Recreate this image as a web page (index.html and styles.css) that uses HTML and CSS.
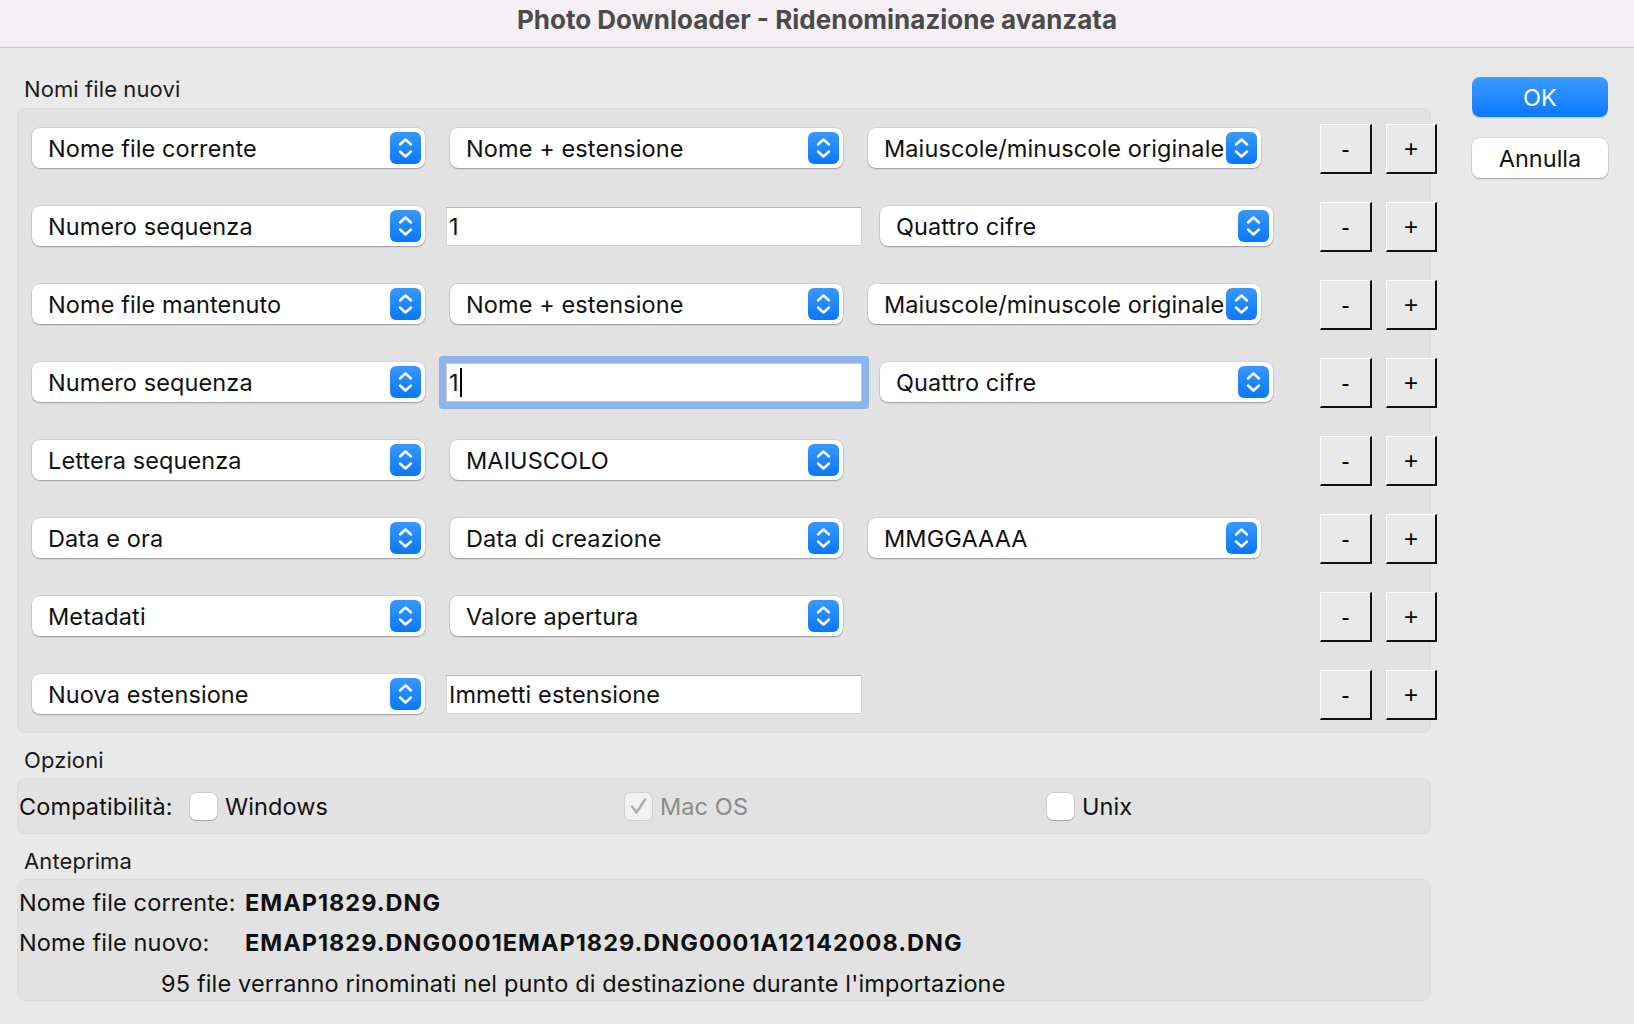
FILE: index.html
```html
<!DOCTYPE html>
<html lang="it">
<head>
<meta charset="utf-8">
<title>Photo Downloader - Ridenominazione avanzata</title>
<link rel="stylesheet" href="styles.css">
</head>
<body>
<div class="window">
  <div class="titlebar"><span class="title">Photo Downloader - Ridenominazione avanzata</span></div>
  <div class="content">
    <div class="main">
      <div class="section-label first">Nomi file nuovi</div>
      <div class="group rows">
        <div class="row">
          <div class="c1"><div class="pop"><span class="pop-text">Nome file corrente</span><span class="stepper"><svg viewBox="0 0 31 32" width="31" height="32"><path d="M10 12.5 L15.5 7.5 L21 12.5 M10 19.5 L15.5 24.5 L21 19.5" fill="none" stroke="#fff" stroke-width="2.4" stroke-linecap="round" stroke-linejoin="round"/></svg></span></div></div>
          <div class="c2"><div class="pop m2"><span class="pop-text">Nome + estensione</span><span class="stepper"><svg viewBox="0 0 31 32" width="31" height="32"><path d="M10 12.5 L15.5 7.5 L21 12.5 M10 19.5 L15.5 24.5 L21 19.5" fill="none" stroke="#fff" stroke-width="2.4" stroke-linecap="round" stroke-linejoin="round"/></svg></span></div></div>
          <div class="c3"><div class="pop"><span class="pop-text">Maiuscole/minuscole originale</span><span class="stepper"><svg viewBox="0 0 31 32" width="31" height="32"><path d="M10 12.5 L15.5 7.5 L21 12.5 M10 19.5 L15.5 24.5 L21 19.5" fill="none" stroke="#fff" stroke-width="2.4" stroke-linecap="round" stroke-linejoin="round"/></svg></span></div></div>
          <div class="c4"><button class="bevel">-</button><button class="bevel">+</button></div>
        </div>
        <div class="row">
          <div class="c1"><div class="pop"><span class="pop-text">Numero sequenza</span><span class="stepper"><svg viewBox="0 0 31 32" width="31" height="32"><path d="M10 12.5 L15.5 7.5 L21 12.5 M10 19.5 L15.5 24.5 L21 19.5" fill="none" stroke="#fff" stroke-width="2.4" stroke-linecap="round" stroke-linejoin="round"/></svg></span></div></div>
          <div class="c2"><div class="field">1</div></div>
          <div class="c3"><div class="pop m3"><span class="pop-text">Quattro cifre</span><span class="stepper"><svg viewBox="0 0 31 32" width="31" height="32"><path d="M10 12.5 L15.5 7.5 L21 12.5 M10 19.5 L15.5 24.5 L21 19.5" fill="none" stroke="#fff" stroke-width="2.4" stroke-linecap="round" stroke-linejoin="round"/></svg></span></div></div>
          <div class="c4"><button class="bevel">-</button><button class="bevel">+</button></div>
        </div>
        <div class="row">
          <div class="c1"><div class="pop"><span class="pop-text">Nome file mantenuto</span><span class="stepper"><svg viewBox="0 0 31 32" width="31" height="32"><path d="M10 12.5 L15.5 7.5 L21 12.5 M10 19.5 L15.5 24.5 L21 19.5" fill="none" stroke="#fff" stroke-width="2.4" stroke-linecap="round" stroke-linejoin="round"/></svg></span></div></div>
          <div class="c2"><div class="pop m2"><span class="pop-text">Nome + estensione</span><span class="stepper"><svg viewBox="0 0 31 32" width="31" height="32"><path d="M10 12.5 L15.5 7.5 L21 12.5 M10 19.5 L15.5 24.5 L21 19.5" fill="none" stroke="#fff" stroke-width="2.4" stroke-linecap="round" stroke-linejoin="round"/></svg></span></div></div>
          <div class="c3"><div class="pop"><span class="pop-text">Maiuscole/minuscole originale</span><span class="stepper"><svg viewBox="0 0 31 32" width="31" height="32"><path d="M10 12.5 L15.5 7.5 L21 12.5 M10 19.5 L15.5 24.5 L21 19.5" fill="none" stroke="#fff" stroke-width="2.4" stroke-linecap="round" stroke-linejoin="round"/></svg></span></div></div>
          <div class="c4"><button class="bevel">-</button><button class="bevel">+</button></div>
        </div>
        <div class="row">
          <div class="c1"><div class="pop"><span class="pop-text">Numero sequenza</span><span class="stepper"><svg viewBox="0 0 31 32" width="31" height="32"><path d="M10 12.5 L15.5 7.5 L21 12.5 M10 19.5 L15.5 24.5 L21 19.5" fill="none" stroke="#fff" stroke-width="2.4" stroke-linecap="round" stroke-linejoin="round"/></svg></span></div></div>
          <div class="c2"><div class="field focused">1<span class="caret"></span></div></div>
          <div class="c3"><div class="pop m3"><span class="pop-text">Quattro cifre</span><span class="stepper"><svg viewBox="0 0 31 32" width="31" height="32"><path d="M10 12.5 L15.5 7.5 L21 12.5 M10 19.5 L15.5 24.5 L21 19.5" fill="none" stroke="#fff" stroke-width="2.4" stroke-linecap="round" stroke-linejoin="round"/></svg></span></div></div>
          <div class="c4"><button class="bevel">-</button><button class="bevel">+</button></div>
        </div>
        <div class="row">
          <div class="c1"><div class="pop"><span class="pop-text">Lettera sequenza</span><span class="stepper"><svg viewBox="0 0 31 32" width="31" height="32"><path d="M10 12.5 L15.5 7.5 L21 12.5 M10 19.5 L15.5 24.5 L21 19.5" fill="none" stroke="#fff" stroke-width="2.4" stroke-linecap="round" stroke-linejoin="round"/></svg></span></div></div>
          <div class="c2"><div class="pop m2"><span class="pop-text">MAIUSCOLO</span><span class="stepper"><svg viewBox="0 0 31 32" width="31" height="32"><path d="M10 12.5 L15.5 7.5 L21 12.5 M10 19.5 L15.5 24.5 L21 19.5" fill="none" stroke="#fff" stroke-width="2.4" stroke-linecap="round" stroke-linejoin="round"/></svg></span></div></div>
          <div class="c3"></div>
          <div class="c4"><button class="bevel">-</button><button class="bevel">+</button></div>
        </div>
        <div class="row">
          <div class="c1"><div class="pop"><span class="pop-text">Data e ora</span><span class="stepper"><svg viewBox="0 0 31 32" width="31" height="32"><path d="M10 12.5 L15.5 7.5 L21 12.5 M10 19.5 L15.5 24.5 L21 19.5" fill="none" stroke="#fff" stroke-width="2.4" stroke-linecap="round" stroke-linejoin="round"/></svg></span></div></div>
          <div class="c2"><div class="pop m2"><span class="pop-text">Data di creazione</span><span class="stepper"><svg viewBox="0 0 31 32" width="31" height="32"><path d="M10 12.5 L15.5 7.5 L21 12.5 M10 19.5 L15.5 24.5 L21 19.5" fill="none" stroke="#fff" stroke-width="2.4" stroke-linecap="round" stroke-linejoin="round"/></svg></span></div></div>
          <div class="c3"><div class="pop"><span class="pop-text">MMGGAAAA</span><span class="stepper"><svg viewBox="0 0 31 32" width="31" height="32"><path d="M10 12.5 L15.5 7.5 L21 12.5 M10 19.5 L15.5 24.5 L21 19.5" fill="none" stroke="#fff" stroke-width="2.4" stroke-linecap="round" stroke-linejoin="round"/></svg></span></div></div>
          <div class="c4"><button class="bevel">-</button><button class="bevel">+</button></div>
        </div>
        <div class="row">
          <div class="c1"><div class="pop"><span class="pop-text">Metadati</span><span class="stepper"><svg viewBox="0 0 31 32" width="31" height="32"><path d="M10 12.5 L15.5 7.5 L21 12.5 M10 19.5 L15.5 24.5 L21 19.5" fill="none" stroke="#fff" stroke-width="2.4" stroke-linecap="round" stroke-linejoin="round"/></svg></span></div></div>
          <div class="c2"><div class="pop m2"><span class="pop-text">Valore apertura</span><span class="stepper"><svg viewBox="0 0 31 32" width="31" height="32"><path d="M10 12.5 L15.5 7.5 L21 12.5 M10 19.5 L15.5 24.5 L21 19.5" fill="none" stroke="#fff" stroke-width="2.4" stroke-linecap="round" stroke-linejoin="round"/></svg></span></div></div>
          <div class="c3"></div>
          <div class="c4"><button class="bevel">-</button><button class="bevel">+</button></div>
        </div>
        <div class="row">
          <div class="c1"><div class="pop"><span class="pop-text">Nuova estensione</span><span class="stepper"><svg viewBox="0 0 31 32" width="31" height="32"><path d="M10 12.5 L15.5 7.5 L21 12.5 M10 19.5 L15.5 24.5 L21 19.5" fill="none" stroke="#fff" stroke-width="2.4" stroke-linecap="round" stroke-linejoin="round"/></svg></span></div></div>
          <div class="c2"><div class="field">Immetti estensione</div></div>
          <div class="c3"></div>
          <div class="c4"><button class="bevel">-</button><button class="bevel">+</button></div>
        </div>
      </div>

      <div class="section-label">Opzioni</div>
      <div class="group options">
        <span class="opt-label">Compatibilità:</span>
        <label class="check win"><span class="box"></span><span>Windows</span></label>
        <label class="check mac disabled"><span class="box checked"><svg viewBox="0 0 27 27" width="27" height="27"><path d="M7 13.5 L11.5 19.5 L20 6.5" fill="none" stroke="#b0b0b0" stroke-width="2.6" stroke-linecap="round" stroke-linejoin="round"/></svg></span><span>Mac OS</span></label>
        <label class="check unix"><span class="box"></span><span>Unix</span></label>
      </div>

      <div class="section-label">Anteprima</div>
      <div class="group preview">
        <div class="pline"><span class="plabel">Nome file corrente:</span><b>EMAP1829.DNG</b></div>
        <div class="pline"><span class="plabel">Nome file nuovo:</span><b>EMAP1829.DNG0001EMAP1829.DNG0001A12142008.DNG</b></div>
        <div class="pline note">95 file verranno rinominati nel punto di destinazione durante l'importazione</div>
      </div>
    </div>
    <div class="side">
      <button class="mac-btn ok">OK</button>
      <button class="mac-btn cancel">Annulla</button>
    </div>
  </div>
</div>
</body>
</html>
```

FILE: styles.css
```css
* { box-sizing: border-box; }
html, body {
  margin: 0;
  padding: 0;
  width: 1634px;
  height: 1024px;
  overflow: hidden;
  background: #e9e9e9;
  font-family: Inter, "Noto Sans", "Liberation Sans", sans-serif;
  color: #111;
}
.window {
  width: 1634px;
  height: 1024px;
  background: #e9e9e9;
}
.titlebar {
  height: 48px;
  background: #f4f0f4;
  border-bottom: 1px solid #cbcbcb;
  display: flex;
  align-items: center;
  justify-content: center;
  padding-bottom: 8px;
}
.title {
  font-size: 26px;
  font-weight: 700;
  color: #4b4b4b;
}
.content {
  display: flex;
}
.main {
  width: 1431px;
  flex: none;
  padding-left: 17px;
}
.section-label {
  font-size: 22px;
  line-height: 26px;
  height: 26px;
  padding-left: 7px;
  margin-top: 14px;
  margin-bottom: 5px;
  color: #1a1a1a;
  letter-spacing: 0.1px;
}
.section-label.first {
  margin-top: 28px;
  margin-bottom: 6px;
}
.group {
  background: #e2e2e2;
  border: 1px solid #dcdcdc;
  border-radius: 8px;
}
.rows {
  height: 625px;
  padding: 14px 0 0 14px;
  display: flex;
  flex-direction: column;
  gap: 28px;
}
.row {
  display: flex;
  align-items: center;
  height: 50px;
  flex: none;
}
.c1, .c2, .c3, .c4 { flex: none; }
.c1 { width: 393px; }
.c2 { width: 443px; }
.c3 { width: 452px; }
.c4 { display: flex; gap: 14px; margin-top: 2px; }

.pop {
  width: 393px;
  height: 40px;
  background: #fff;
  border-radius: 8px;
  box-shadow: 0 0 0 0.5px rgba(0,0,0,0.12), 0 1px 1.5px rgba(0,0,0,0.28);
  display: flex;
  align-items: center;
  justify-content: space-between;
  padding: 0 4px 0 16px;
  font-size: 23.5px;
  letter-spacing: 0.1px;
}
.pop.m2 { margin-left: 25px; }
.pop.m3 { margin-left: 12px; }
.pop-text { white-space: nowrap; overflow: hidden; }
.stepper {
  width: 31px;
  height: 32px;
  border-radius: 6px;
  background: linear-gradient(#3898ff, #0a78f5);
  display: flex;
  flex: none;
}
.field {
  width: 416px;
  height: 39px;
  margin-left: 21px;
  background: #fff;
  border: 1px solid #d4d4d4;
  border-top-color: #b9b9b9;
  font-size: 23.5px;
  letter-spacing: 0.1px;
  line-height: 37px;
  padding-left: 2px;
  display: flex;
  align-items: center;
}
.field.focused {
  border-color: #c9c9c9;
  border-radius: 1px;
  box-shadow: 0 0 0 7px #8db4ea;
}
.caret {
  display: inline-block;
  width: 2px;
  height: 29px;
  background: #000;
  margin-left: 1px;
}
.bevel {
  width: 52px;
  height: 50px;
  padding: 0;
  background: #e9e9e9;
  border-style: solid;
  border-width: 1px 2px 2px 1px;
  border-color: #fff #111 #111 #fff;
  font-family: "Liberation Sans", Arial, sans-serif;
  font-size: 24px;
  color: #000;
  display: flex;
  align-items: center;
  justify-content: center;
}
.bevel + .bevel { width: 51px; }

.options {
  height: 56px;
  display: flex;
  align-items: center;
  padding-left: 1px;
  font-size: 23.5px;
  letter-spacing: 0.1px;
}
.opt-label { width: 171px; flex: none; }
.check {
  display: flex;
  align-items: center;
  gap: 8px;
  flex: none;
}
.check.win { width: 435px; }
.check.mac { width: 422px; color: #8a8a8a; }
.box {
  width: 27px;
  height: 27px;
  background: #fff;
  border-radius: 6px;
  box-shadow: 0 0 0 0.5px rgba(0,0,0,0.18), 0 1px 1px rgba(0,0,0,0.18);
  display: flex;
  flex: none;
}
.box.checked { background: #f2f2f2; box-shadow: 0 0 0 1px rgba(0,0,0,0.08); }

.preview {
  height: 122px;
  padding: 2px 0 0 1px;
  font-size: 23.5px;
  letter-spacing: 0.15px;
}
.pline {
  height: 40.5px;
  display: flex;
  align-items: center;
  white-space: nowrap;
}
.plabel { width: 226px; flex: none; }
.pline b { font-weight: 700; letter-spacing: 1px; }
.pline.note { padding-left: 142px; }

.side {
  padding-left: 41px;
  padding-top: 29px;
  display: flex;
  flex-direction: column;
  gap: 21px;
}
.mac-btn {
  width: 136px;
  height: 40px;
  border: none;
  border-radius: 8px;
  font-family: Inter, "Liberation Sans", sans-serif;
  font-size: 23.5px;
  padding: 0;
}
.mac-btn.ok {
  background: linear-gradient(#3c9bff, #0a78ff);
  color: #fff;
  box-shadow: 0 1px 1px rgba(0,0,0,0.15);
}
.mac-btn.cancel {
  background: #fff;
  color: #111;
  box-shadow: 0 0 0 0.5px rgba(0,0,0,0.12), 0 1px 1.5px rgba(0,0,0,0.28);
}
```
